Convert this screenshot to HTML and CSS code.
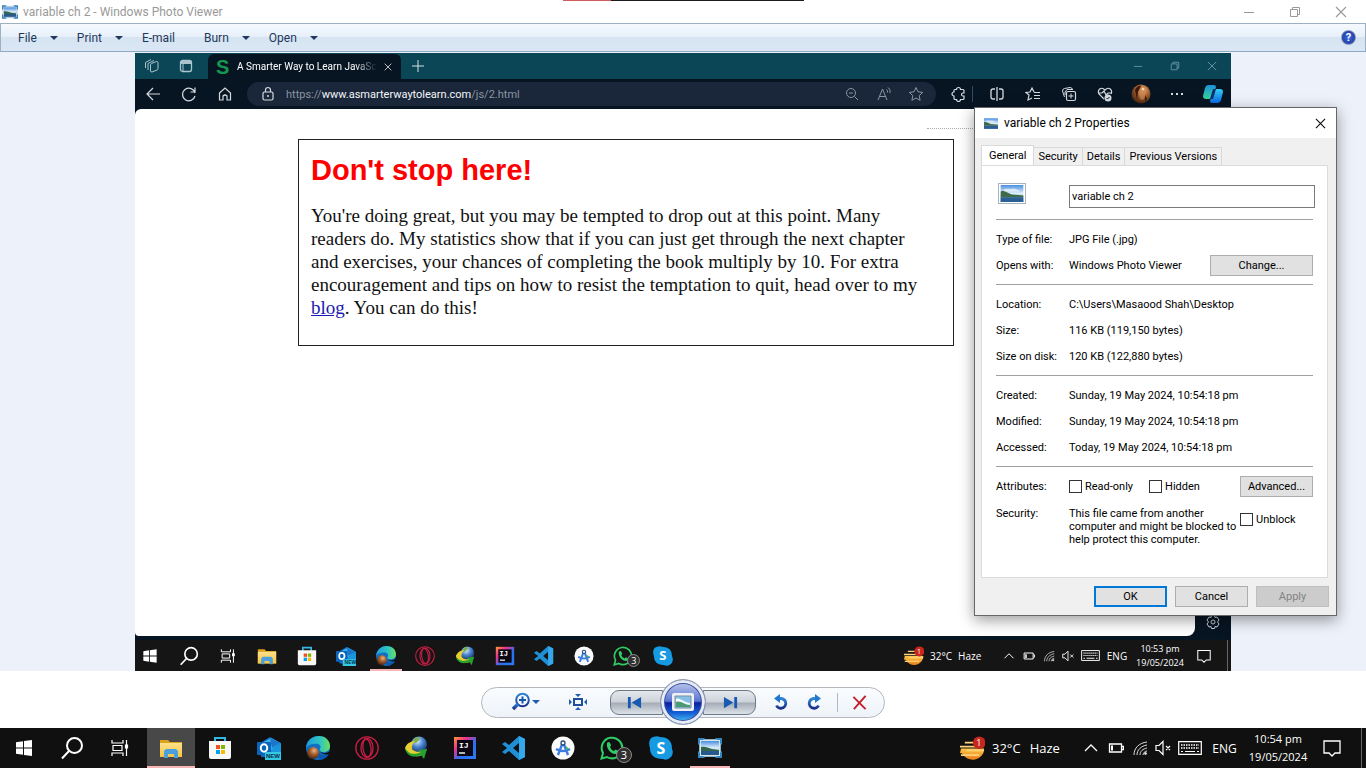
FILE: index.html
```html
<!DOCTYPE html>
<html lang="en">
<head>
<meta charset="utf-8">
<title>variable ch 2 - Windows Photo Viewer</title>
<link rel="stylesheet" href="styles.css">
</head>
<body>
<svg class="sprite" aria-hidden="true">
  <defs>
    <linearGradient id="gBlue" x1="0" y1="0" x2="0" y2="1"><stop offset="0" stop-color="#2f86d6"/><stop offset="1" stop-color="#1c2f8a"/></linearGradient>
    <linearGradient id="gSky" x1="0" y1="0" x2="0" y2="1"><stop offset="0" stop-color="#4a8fe0"/><stop offset=".5" stop-color="#dff0fa"/><stop offset="1" stop-color="#3a6ea5"/></linearGradient>
    <linearGradient id="gEdge" x1="0" y1="0" x2="1" y2="0"><stop offset="0" stop-color="#1f9be0"/><stop offset=".6" stop-color="#2fc6c0"/><stop offset="1" stop-color="#6be05a"/></linearGradient>
    <linearGradient id="gIj" x1="0" y1="0" x2="1" y2="1"><stop offset="0" stop-color="#fe9a2e"/><stop offset=".3" stop-color="#f0318c"/><stop offset=".6" stop-color="#2a6ff0"/><stop offset="1" stop-color="#2b7cf5"/></linearGradient>
    <linearGradient id="gFolder" x1="0" y1="0" x2="0" y2="1"><stop offset="0" stop-color="#ffe08a"/><stop offset="1" stop-color="#f5c542"/></linearGradient>
    <linearGradient id="gSun" x1="0" y1="0" x2="0" y2="1"><stop offset="0" stop-color="#ffc846"/><stop offset="1" stop-color="#ea7d1a"/></linearGradient>
    <radialGradient id="gGlobe" cx=".4" cy=".3" r=".7"><stop offset="0" stop-color="#d6ecff"/><stop offset=".5" stop-color="#4d86cf"/><stop offset="1" stop-color="#173a7c"/></radialGradient>
    <radialGradient id="gFace" cx=".6" cy=".3" r=".8"><stop offset="0" stop-color="#f0b27c"/><stop offset=".4" stop-color="#a9622f"/><stop offset="1" stop-color="#32170c"/></radialGradient>
    <linearGradient id="gCop1" x1="0" y1="0" x2="0" y2="1"><stop offset="0" stop-color="#1b8fd8"/><stop offset="1" stop-color="#35d59a"/></linearGradient>
    <linearGradient id="gCop2" x1="0" y1="0" x2="0" y2="1"><stop offset="0" stop-color="#35cdf2"/><stop offset="1" stop-color="#0b6be8"/></linearGradient>
  </defs>
  <symbol id="photo" viewBox="0 0 24 18"><rect width="24" height="18" fill="url(#gSky)"/><path d="M0 7c5-2 7 2 12 3l12 1v2H0z" fill="#3e6b4a"/><path d="M0 13h24v5H0z" fill="#2c5f95"/><path d="M3 5c3-2 6 0 9-1s5 1 8 2v1H4z" fill="#fff" opacity=".6"/></symbol>
  <symbol id="viewer" viewBox="0 0 24 20"><path d="M1.500 1.500h21v17h-21z" fill="#d5e6ee" stroke="#8fb2c8"/><rect x="3" y="3" width="18" height="14" fill="url(#gSky)"/><path d="M3 9c4-1 7 1 11 2l7 1v2H3z" fill="#34684e"/><path d="M3 13h18v4H3z" fill="#28598c"/><path d="M0 0h7L5 2H2v3L0 7zM24 0h-7l2 2h3v3l2 2zM0 20h7l-2-2H2v-3l-2-2zM24 20h-7l2-2h3v-3l2-2z" fill="#3583bd"/></symbol>
  <symbol id="win" viewBox="0 0 24 24"><path d="M4 6.200l7-1v6.300H4zM12 5l8-1v7.500h-8zM4 12.500h7v6.300l-7-1zM12 12.500h8V20l-8-1z" fill="#fff"/></symbol>
  <symbol id="search" viewBox="0 0 24 24" fill="none" stroke="#fff" stroke-width="2"><circle cx="14.500" cy="9.500" r="7.500"/><path d="M9 15l-7 7.500"/></symbol>
  <symbol id="taskview" viewBox="0 0 24 24" fill="none" stroke="#fff" stroke-width="1.200"><path d="M4 4v3h11V4M5 9.500h9v5H5zM4 20v-3h11v3M18.500 4v16"/><path d="M17.500 9h2v3h-2z" fill="#fff"/></symbol>
  <symbol id="folder" viewBox="0 0 24 24"><path d="M1 4h8l2 2h12v15H1z" fill="#dca21c"/><path d="M1 7h22v14H1z" fill="url(#gFolder)"/><path d="M5 22v-7l2-2h10l2 2v7h-4v-4H9v4z" fill="#4aa0dc"/></symbol>
  <symbol id="store" viewBox="0 0 24 24"><path d="M7 6V2h10v4" fill="none" stroke="#35b6e8" stroke-width="2"/><path d="M1 5h22v16q0 2-2 2H3q-2 0-2-2z" fill="#f7f7f7"/><path d="M8 9h4v4H8z" fill="#f05024"/><path d="M13 9h4v4h-4z" fill="#7eb900"/><path d="M8 14h4v4H8z" fill="#00a2ed"/><path d="M13 14h4v4h-4z" fill="#fdb900"/></symbol>
  <symbol id="outlook" viewBox="0 0 24 24"><path d="M3 7l10-6 11 6v14H4z" fill="#1368bd"/><path d="M5 7l9-5 9 5-10 8z" fill="#38b4ed"/><path d="M13 2l10 5-8 5z" fill="#1a76c8"/><path d="M11 16l13-9v14H9z" fill="#1897df"/><rect y="6" width="14" height="13" rx="1" fill="#0a65bd"/><ellipse cx="7" cy="12" rx="3.200" ry="3.800" fill="none" stroke="#fff" stroke-width="2"/><rect x="8" y="16" width="16" height="8" fill="#35c9e6"/></symbol>
  <symbol id="edge" viewBox="0 0 24 24"><circle cx="12" cy="12" r="12" fill="#126fc2"/><path d="M0 12C1 4 7 0 13 0c7 0 11 5 11 10 0 4-3 6-7 6-3 0-4-1-3-3 2-4-2-6-6-5-4 0-7 2-8 4z" fill="url(#gEdge)"/><path d="M12 13c0 6 6 8 11 5-1 3-5 5-8 6-5-2-7-8-3-11z" fill="#0a5ab0"/><path d="M14 14c1 4 6 4 10 1v3c-4 1-9 1-10-4z" fill="#111"/><circle cx="7" cy="17" r="6" fill="url(#gFace)"/></symbol>
  <symbol id="opera" viewBox="0 0 24 24" fill="none" stroke="#c81e45" stroke-width="1.300"><circle cx="12" cy="12" r="11.200"/><ellipse cx="12" cy="12" rx="6" ry="9.500"/><ellipse cx="12" cy="12" rx="4" ry="9" transform="rotate(-7 12 12)"/></symbol>
  <symbol id="idm" viewBox="0 0 24 24"><circle cx="15" cy="8.500" r="8" fill="url(#gGlobe)"/><path d="M11 2c3-2 6 0 4 2s-2 3-4 3-2-3 0-5z" fill="#7dae4a"/><path d="M1 12c2-5 6-7 10-7-3 3-4 7-2 9 4 3 8 2 14-1-3 6-7 8-12 7C6 20 2 17 1 12z" fill="#e7cf32"/><path d="M1 12c1 7 8 11 16 7l3 4 3-10-9 1 3 2C9 20 4 17 1 12z" fill="#25a12e"/></symbol>
  <symbol id="ij" viewBox="0 0 24 24"><path d="M1 1h22v22H1z" fill="url(#gIj)"/><path d="M4 4h16v16H4z" fill="#0b0713"/><path d="M6 17h6" fill="none" stroke="#fff" stroke-width="1.400"/></symbol>
  <symbol id="code" viewBox="0 0 24 24"><path d="M17 0l6 3v18l-6 3-10-9-4 3-3-2 5-4-5-4 3-2 4 3zM17 7l-6 5 6 5z" fill="#1e8fd5" fill-rule="evenodd"/><path d="M17 0l6 3v18l-6 3z" fill="#35a8ec"/></symbol>
  <symbol id="studio" viewBox="0 0 24 24"><circle cx="12" cy="12" r="11.500" fill="#fafafa"/><path d="M12 6L7 19M12 6l5 13M5 13q7 4 14 0" fill="none" stroke="#3b7de0" stroke-width="2.400"/><circle cx="12" cy="7" r="2" fill="#fff" stroke="#294b7c" stroke-width="1.300"/><path d="M15 10l3 3-3 1z" fill="#42b265"/></symbol>
  <symbol id="whatsapp" viewBox="0 0 24 24"><path d="M1.500 22.500L3 17A10.300 10.300 0 1 1 7 21z" fill="none" stroke="#2fcc66" stroke-width="2"/><path d="M7 7q2-2 3 0l1 2q0 1-1 2 1 3 4 4l1.500-1.500 3 1.500q0 3-3 3C11 18 6 13 7 7z" fill="#2fcc66"/></symbol>
  <symbol id="skype" viewBox="0 0 24 24"><path d="M2 2q5-3 9-1 12 0 12 12 2 4-1 8-4 4-8 2Q1 23 1 12-1 6 2 2z" fill="#169be3"/></symbol>
  <symbol id="haze" viewBox="0 0 26 26"><path d="M1 13h24a12 11 0 0 1-23 5h-2" fill="url(#gSun)"/><path d="M5 7h10M0 11h18M7 15h18M1 20h19" stroke="#ffd27a" stroke-width="1.800"/><circle cx="20" cy="7" r="6.500" fill="#c7271d"/></symbol>
  <symbol id="up" viewBox="0 0 16 16"><path d="M2 11l6-6 6 6" fill="none" stroke="#fff" stroke-width="1.300"/></symbol>
  <symbol id="battery" viewBox="0 0 16 16"><path d="M1.500 4h12v8h-12zM14 6.500h1.500v3H14" fill="none" stroke="#fff" stroke-width="1.300"/><path d="M3 5.500h2v5H3z" fill="#fff"/></symbol>
  <symbol id="wifi" viewBox="0 0 16 16" fill="none" stroke="#ddd"><path d="M2 15C2 8 7 3 15 2M5 15c0-5 4-9 10-10M8 15c0-4 3-6 7-7M11 15c0-2 2-4 4-4"/><circle cx="13.500" cy="13.500" r="1" fill="#ddd"/></symbol>
  <symbol id="mute" viewBox="0 0 16 16"><path d="M1 5.500h3l4-4v13l-4-4H1zM11 6l4 4M15 6l-4 4" fill="none" stroke="#fff" stroke-width="1.200"/></symbol>
  <symbol id="keyboard" viewBox="0 0 24 14"><path d="M.7.700h22.600v12.600H.7z" fill="none" stroke="#fff" stroke-width="1.200"/><path d="M3 4h18M3 7h18" stroke="#fff" stroke-width="1.500" stroke-dasharray="1.500 1"/><path d="M3 10.500h2M7 10.500h10M19 10.500h2" stroke="#fff" stroke-width="1.200"/></symbol>
  <symbol id="note" viewBox="0 0 18 18"><path d="M1 2h16v12h-5l-3 3-3-3H1z" fill="none" stroke="#fff" stroke-width="1.300"/></symbol>
  <symbol id="min" viewBox="0 0 12 12"><path d="M1 6.500h10" fill="none" stroke="currentColor"/></symbol>
  <symbol id="restore" viewBox="0 0 12 12"><path d="M1.500 3.500h7v7h-7zM3.500 3.500v-2h7v7h-2" fill="none" stroke="currentColor"/></symbol>
  <symbol id="close" viewBox="0 0 12 12"><path d="M1 1l10 10M11 1L1 11" fill="none" stroke="currentColor" stroke-width="1.100"/></symbol>
  <symbol id="workspaces" viewBox="0 0 16 16"><path d="M6.500 7q0-1 1-1.500l5-2q1.500 0 1.500 1v6q0 1-1 1.500l-5 2q-1.500 0-1.500-1zM4 12V5.500L10 2.500M1.500 10V4.500L7 1.500" fill="none" stroke="currentColor"/></symbol>
  <symbol id="tabs" viewBox="0 0 16 16"><rect x="2.500" y="2.500" width="11" height="11" rx="2" fill="none" stroke="currentColor" stroke-width="1.300"/><path d="M2 3h12v3H2z" fill="currentColor"/><path d="M5 6v7" stroke="currentColor"/></symbol>
  <symbol id="back" viewBox="0 0 16 16"><path d="M15 8H2M8 2L2 8l6 6" fill="none" stroke="currentColor" stroke-width="1.200"/></symbol>
  <symbol id="reload" viewBox="0 0 16 16"><path d="M14 7a6.300 6.300 0 1 0 0 3M14 1.500V6H9.500" fill="none" stroke="currentColor" stroke-width="1.200"/></symbol>
  <symbol id="home" viewBox="0 0 16 16"><path d="M2.500 7L8 2l5.500 5v7H10v-4q-2-2-4 0v4H2.500z" fill="none" stroke="currentColor" stroke-width="1.200"/></symbol>
  <symbol id="lock" viewBox="0 0 16 16"><rect x="3" y="6" width="10" height="8" rx="1.500" fill="none" stroke="currentColor" stroke-width="1.200"/><path d="M5.500 6V4a2.500 2.500 0 0 1 5 0v2" fill="none" stroke="currentColor" stroke-width="1.200"/><circle cx="8" cy="10" r="1" fill="currentColor"/></symbol>
  <symbol id="zoomout" viewBox="0 0 16 16"><circle cx="7" cy="7" r="4.500" fill="none" stroke="currentColor"/><path d="M10.500 10.500L14 14M5 7h4" stroke="currentColor"/></symbol>
  <symbol id="read" viewBox="0 0 16 16"><path d="M2 14L6.500 3 11 14M3.500 10.500h6M10.500 3.500q1.500 1 1 3M12 1.500q3 2 2 5.500" fill="none" stroke="currentColor"/></symbol>
  <symbol id="star" viewBox="0 0 16 16"><path d="M8 1.500l2 4.300 4.700.600-3.500 3.200.9 4.700L8 12l-4.100 2.300.9-4.700L1.300 6.400 6 5.800z" fill="none" stroke="currentColor"/></symbol>
  <symbol id="puzzle" viewBox="0 0 16 16"><path d="M5.500 3.500a2 2 0 0 1 4 0H12q1 0 1 1V7h-1a1.500 1.500 0 0 0 0 3h1v2.500q0 1-1 1H9.500a2 2 0 0 1-4 0H4q-1 0-1-1V10a2 2 0 0 1 0-4V4.500q0-1 1-1z" fill="none" stroke="currentColor" stroke-width="1.200"/></symbol>
  <symbol id="split" viewBox="0 0 16 16"><path d="M6 3H4Q2 3 2 5v6q0 2 2 2h2M10 3h2q2 0 2 2v6q0 2-2 2h-2M8 1v14" fill="none" stroke="currentColor" stroke-width="1.300"/></symbol>
  <symbol id="favs" viewBox="0 0 16 16"><path d="M9 6L7 2 5 6l-4 .5L4 9l-1 5 4-2M9 6.500h6M9 9.500h6M9 12.500h6" fill="none" stroke="currentColor" stroke-width="1.200"/></symbol>
  <symbol id="collect" viewBox="0 0 16 16"><rect x="5.500" y="5.500" width="9" height="9" rx="1.500" fill="none" stroke="currentColor" stroke-width="1.200"/><path d="M10 7.500v5M7.500 10h5M3.500 11L1.500 5q0-2 2-2.500L9 1.500q2 0 2.500 2M4 9V6l2-2.500h6" fill="none" stroke="currentColor"/></symbol>
  <symbol id="heart" viewBox="0 0 16 16"><path d="M7 13L2 8C0 4 4 0 8 4c4-4 8 0 6 4M1 7h4l2-2 2 4 2-2h3" fill="none" stroke="currentColor" stroke-width="1.200"/><circle cx="11" cy="12" r="3.500" fill="currentColor"/><path d="M9.500 12l1 1 2-2" fill="none" stroke="#071523"/></symbol>
  <symbol id="dots" viewBox="0 0 16 16"><path d="M2 8h2M7 8h2M12 8h2" stroke="currentColor" stroke-width="2"/></symbol>
  <symbol id="copilot" viewBox="0 0 20 20"><path d="M5 1h6q2 0 2 2l-3 9q-1 3-4 3H3q-3 0-3-3L2 4q1-3 3-3z" fill="url(#gCop1)"/><path d="M12 5h5q3 0 3 3l-2 8q-1 3-3 3H9q-2 0-2-2l3-9q1-3 2-3z" fill="url(#gCop2)"/><path d="M10 5h3l-3 10H7z" fill="#0a2f6d"/></symbol>
  <symbol id="gear" viewBox="0 0 16 16" fill="none" stroke="#cfd6dc"><circle cx="8" cy="8" r="2"/><path d="M6.500 1.500h3l.5 2 2-.5 2 3-1.500 2L14 10l-2 3-2-.5-.5 2h-3l-.5-2-2 .5-2-3 1.500-2L2 6l2-3 2 .5z"/></symbol>
  <symbol id="zoomin" viewBox="0 0 20 20" fill="none" stroke="url(#gBlue)"><circle cx="11.500" cy="8" r="6.300" stroke-width="2"/><path d="M7 12l-5 5" stroke-width="3.500"/><path d="M11.500 4.500v7M8 8h7" stroke="#1557ad" stroke-width="2"/></symbol>
  <symbol id="fit" viewBox="0 0 20 20"><path d="M6 7h8v6H6z" fill="none" stroke="#1c4f9c" stroke-width="2"/><path d="M7 2h6l-3 3zM7 18h6l-3-3zM1 7v6l3-3zM19 7v6l-3-3z" fill="#1b5eb5"/></symbol>
  <symbol id="prev" viewBox="0 0 16 16"><path d="M1 2h3v12H1zM15 2v12L5 8z" fill="#1759b3"/></symbol>
  <symbol id="next" viewBox="0 0 16 16"><path d="M12 2h3v12h-3zM1 2v12l10-6z" fill="#1759b3"/></symbol>
  <symbol id="ccw" viewBox="0 0 16 16"><path d="M5 4.500h3.500a4.900 4.900 0 1 1-5 7" fill="none" stroke="url(#gBlue)" stroke-width="2.800"/><path d="M1 4.500L7 0v9z" fill="#2477c9"/></symbol>
  <symbol id="cw" viewBox="0 0 16 16"><path d="M11 4.500H7.500a4.900 4.900 0 1 0 5 7" fill="none" stroke="url(#gBlue)" stroke-width="2.800"/><path d="M15 4.500L9 0v9z" fill="#2477c9"/></symbol>
  <symbol id="del" viewBox="0 0 16 16"><path d="M1.500 2l13 13M14.500 1L2 15" fill="none" stroke="#c01f2b" stroke-width="2"/></symbol>
</svg>

<header class="titlebar">
  <svg class="app-icon"><use href="#viewer"/></svg>
  <h1 class="app-title">variable ch 2 - Windows Photo Viewer</h1>
  <div class="recorder"></div>
  <div class="window-buttons">
    <button aria-label="Minimize"><svg><use href="#min"/></svg></button>
    <button aria-label="Restore"><svg><use href="#restore"/></svg></button>
    <button aria-label="Close"><svg><use href="#close"/></svg></button>
  </div>
</header>

<nav class="menu">
  <button class="drop">File</button>
  <button class="drop">Print</button>
  <button class="mail">E-mail</button>
  <button class="drop">Burn</button>
  <button class="drop">Open</button>
  <button class="help" aria-label="Help">?</button>
</nav>

<main class="stage">
  <section class="browser">
    <div class="tabbar">
      <div class="tab-tools"><svg class="i16"><use href="#workspaces"/></svg><svg class="i16"><use href="#tabs"/></svg></div>
      <div class="tab"><b class="favicon">S</b><span class="tab-title">A Smarter Way to Learn JavaScrip</span><svg class="i8"><use href="#close"/></svg></div>
      <button class="plus" aria-label="New tab"><svg viewBox="0 0 12 12"><path d="M6 0v12M0 6h12" stroke="#d5e2e6"/></svg></button>
      <div class="tab-window"><svg><use href="#min"/></svg><svg><use href="#restore"/></svg><svg><use href="#close"/></svg></div>
    </div>
    <div class="toolbar">
      <button aria-label="Back"><svg><use href="#back"/></svg></button>
      <button aria-label="Refresh"><svg><use href="#reload"/></svg></button>
      <button aria-label="Home"><svg><use href="#home"/></svg></button>
      <div class="address">
        <svg><use href="#lock"/></svg>
        <span class="url">https://<b>www.asmarterwaytolearn.com</b>/js/2.html</span>
        <svg><use href="#zoomout"/></svg><svg><use href="#read"/></svg><svg><use href="#star"/></svg>
      </div>
      <button class="ext" aria-label="Extensions"><svg><use href="#puzzle"/></svg></button>
      <button aria-label="Split screen"><svg><use href="#split"/></svg></button>
      <button aria-label="Favorites"><svg><use href="#favs"/></svg></button>
      <button aria-label="Collections"><svg><use href="#collect"/></svg></button>
      <button aria-label="Browser essentials"><svg><use href="#heart"/></svg></button>
      <button aria-label="Profile"><svg class="i20" viewBox="0 0 20 20"><circle cx="10" cy="10" r="9.500" fill="url(#gFace)"/><path d="M7 8q0-4 4-4t4 5l-2 6-3 1z" fill="#c98551" opacity=".7"/><path d="M4 6q3-5 6-4L7 8l-1 8zM14 11l2 4-2 3z" fill="#3a190c"/><circle cx="12" cy="5" r="1.300" fill="#f8d7b1"/></svg></button>
      <button aria-label="More"><svg><use href="#dots"/></svg></button>
      <button aria-label="Copilot"><svg class="i20"><use href="#copilot"/></svg></button>
    </div>
    <div class="view">
      <div class="page">
        <div class="dotted"></div>
        <article class="notice">
          <h2>Don't stop here!</h2>
          <p>You're doing great, but you may be tempted to drop out at this point. Many<br>readers do. My statistics show that if you can just get through the next chapter<br>and exercises, your chances of completing the book multiply by 10. For extra<br>encouragement and tips on how to resist the temptation to quit, head over to my<br><a href="#blog">blog</a>. You can do this!</p>
        </article>
      </div>
      <aside class="side"><svg class="i16"><use href="#gear"/></svg></aside>
    </div>
    <div class="taskbar small">
      <div class="system"><svg><use href="#win"/></svg><svg><use href="#search"/></svg><svg><use href="#taskview"/></svg></div>
      <div class="apps">
        <span><svg><use href="#folder"/></svg></span><span><svg><use href="#store"/></svg></span><span><svg><use href="#outlook"/></svg><em class="new">NEW</em></span><span class="open"><svg><use href="#edge"/></svg></span><span><svg><use href="#opera"/></svg></span><span><svg><use href="#idm"/></svg></span><span><svg><use href="#ij"/></svg><em class="ij">IJ</em></span><span><svg><use href="#code"/></svg></span><span><svg><use href="#studio"/></svg></span><span><svg><use href="#whatsapp"/></svg><em class="count">3</em></span><span><svg><use href="#skype"/></svg><em class="skype">S</em></span>
      </div>
      <div class="tray">
        <span class="weather"><svg><use href="#haze"/></svg><em class="alert">1</em></span><span class="temp"><span>32°C</span><span>Haze</span></span>
        <svg><use href="#up"/></svg><svg><use href="#battery"/></svg><svg><use href="#wifi"/></svg><svg><use href="#mute"/></svg><svg class="kbd"><use href="#keyboard"/></svg>
        <span>ENG</span><span class="clock">10:53 pm<br>19/05/2024</span><svg class="bell"><use href="#note"/></svg><i></i><i class="peek"></i>
      </div>
    </div>
  </section>
</main>

<div class="controls">
  <div class="pill">
    <button class="zoom" aria-label="Zoom"><svg class="i20"><use href="#zoomin"/></svg></button>
    <button class="fit" aria-label="Fit to window"><svg class="i20"><use href="#fit"/></svg></button>
    <button class="step prev" aria-label="Previous"><svg><use href="#prev"/></svg></button>
    <button class="play" aria-label="Play slide show"><svg viewBox="0 0 24 20"><rect x="1" y="1" width="22" height="18" rx="2" fill="#edf0f4"/><path d="M4 4h16v12H4z" fill="#86bfe5" stroke="#7b8ea6"/><path d="M5 7c4-2 8 4 14 4v2H5z" fill="#f7fcff"/><path d="M5 10c5-2 8 3 14 3v2H5z" fill="#4b9a72"/></svg></button>
    <button class="step next" aria-label="Next"><svg><use href="#next"/></svg></button>
    <button class="turn" aria-label="Rotate left"><svg><use href="#ccw"/></svg></button>
    <button class="turn" aria-label="Rotate right"><svg><use href="#cw"/></svg></button>
    <button class="delete" aria-label="Delete"><svg><use href="#del"/></svg></button>
  </div>
</div>

<footer class="taskbar large">
  <div class="system"><svg><use href="#win"/></svg><svg><use href="#search"/></svg><svg><use href="#taskview"/></svg></div>
  <div class="apps">
    <span class="open active"><svg><use href="#folder"/></svg></span><span><svg><use href="#store"/></svg></span><span><svg><use href="#outlook"/></svg><em class="new">NEW</em></span><span><svg><use href="#edge"/></svg></span><span><svg><use href="#opera"/></svg></span><span><svg><use href="#idm"/></svg></span><span><svg><use href="#ij"/></svg><em class="ij">IJ</em></span><span><svg><use href="#code"/></svg></span><span><svg><use href="#studio"/></svg></span><span><svg><use href="#whatsapp"/></svg><em class="count">3</em></span><span><svg><use href="#skype"/></svg><em class="skype">S</em></span><span class="open running"><svg><use href="#viewer"/></svg></span>
  </div>
  <div class="tray">
    <span class="weather"><svg><use href="#haze"/></svg><em class="alert">1</em></span><span class="temp"><span>32°C</span><span>Haze</span></span>
    <svg><use href="#up"/></svg><svg><use href="#battery"/></svg><svg><use href="#wifi"/></svg><svg><use href="#mute"/></svg><svg class="kbd"><use href="#keyboard"/></svg>
    <span>ENG</span><span class="clock">10:54 pm<br>19/05/2024</span><svg class="bell"><use href="#note"/></svg><i></i><i class="peek"></i>
  </div>
</footer>

<form class="dialog">
  <div class="dialog-title"><svg class="dialog-icon"><use href="#photo"/></svg><h2>variable ch 2 Properties</h2><button type="button" class="dialog-close" aria-label="Close"><svg><use href="#close"/></svg></button></div>
  <div class="dialog-tabs">
    <button type="button" class="current">General</button><button type="button">Security</button><button type="button">Details</button><button type="button">Previous Versions</button>
  </div>
  <div class="panel">
    <div class="file"><svg class="thumb"><use href="#photo"/></svg><input type="text" value="variable ch 2" aria-label="File name"></div>
    <dl>
      <div><dt>Type of file:</dt><dd>JPG File (.jpg)</dd></div>
      <div><dt>Opens with:</dt><dd>Windows Photo Viewer</dd><button type="button" class="btn change">Change...</button></div>
    </dl>
    <dl>
      <div><dt>Location:</dt><dd>C:\Users\Masaood Shah\Desktop</dd></div>
      <div><dt>Size:</dt><dd>116 KB (119,150 bytes)</dd></div>
      <div><dt>Size on disk:</dt><dd>120 KB (122,880 bytes)</dd></div>
    </dl>
    <dl>
      <div><dt>Created:</dt><dd>Sunday, 19 May 2024, 10:54:18 pm</dd></div>
      <div><dt>Modified:</dt><dd>Sunday, 19 May 2024, 10:54:18 pm</dd></div>
      <div><dt>Accessed:</dt><dd>Today, 19 May 2024, 10:54:18 pm</dd></div>
    </dl>
    <dl>
      <div><dt>Attributes:</dt><dd class="checks"><label><input type="checkbox">Read-only</label><label><input type="checkbox">Hidden</label></dd><button type="button" class="btn">Advanced...</button></div>
      <div class="security"><dt>Security:</dt><dd>This file came from another<br>computer and might be blocked to<br>help protect this computer.</dd><label><input type="checkbox">Unblock</label></div>
    </dl>
  </div>
  <div class="actions"><button type="button" class="btn ok">OK</button><button type="button" class="btn">Cancel</button><button type="button" class="btn" disabled>Apply</button></div>
</form>
</body>
</html>
```
FILE: styles.css
```css
* { box-sizing: border-box; }
body {
  margin: 0;
  min-height: 100vh;
  display: flex;
  flex-direction: column;
  position: relative;
  background: #fff;
  font: 11px "Open Sans", "Noto Sans", sans-serif;
}
h1, h2, p, dl, dd { margin: 0; }
button { border: 0; padding: 0; background: none; font: inherit; color: inherit; }
svg { display: block; width: 16px; height: 16px; flex: none; }
.sprite { position: absolute; width: 0; height: 0; }
.i8 { width: 8px; height: 8px; }
.i16 { width: 16px; height: 16px; }

/* Viewer window */
.titlebar { height: 23px; display: flex; align-items: center; padding: 0 2px; color: #999; }
.app-icon { width: 16px; height: 14px; margin-right: 5px; }
.app-title { font: 12px "Roboto", sans-serif; flex: 1; }
.recorder {
  position: absolute; top: 0; left: 563px; width: 241px; height: 1px;
  background: linear-gradient(90deg, #d05a5e 48px, #1c1c1c 48px);
}
.window-buttons { display: flex; }
.window-buttons button { width: 46px; display: flex; justify-content: center; }
.window-buttons svg { width: 12px; height: 12px; }

.menu {
  height: 29px;
  display: flex;
  align-items: center;
  padding: 0 9px 0 17px;
  color: #1e395b;
  font-family: "Roboto", sans-serif;
  font-size: 12px;
  border: 1px solid #9db0c3;
  border-bottom-color: #8fabc4;
  background: linear-gradient(#f6fafe, #e6eff9 48%, #d6e4f2 49%, #dae6f3);
}
.drop { display: flex; align-items: center; gap: 13px; margin-right: 19px; }
.drop::after { content: ""; border: 4px solid transparent; border-top-color: #1e395b; border-bottom: 0; }
.mail { margin-right: 29px; }
.help {
  width: 15px; height: 15px; margin-left: auto;
  border-radius: 50%;
  border: 1px solid #8a97b8;
  background: radial-gradient(#3d6be0, #15308f);
  color: #fff; font-weight: 700; font-size: 11px; line-height: 13px;
}
.stage { flex: 1; display: flex; padding: 1px 135px 0; background: #edf1fa; }
.browser { flex: 1; display: flex; flex-direction: column; background: #071523; }

.tabbar {
  height: 26px; display: flex; align-items: center;
  background: #0b4657; color: #a9c4cc;
}
.tab-tools { width: 73px; display: flex; gap: 18px; padding-left: 9px; }
.tab {
  width: 193px; height: 25px; align-self: flex-end;
  display: flex; align-items: center;
  padding: 0 9px 0 8px;
  border-radius: 6px 6px 0 0;
  background: #071523; color: #fff; font: 10px "Roboto", sans-serif;
}
.favicon { width: 21px; font: 700 20px/20px "Liberation Sans", sans-serif; color: #15974f; }
.tab-title {
  flex: 1; overflow: hidden; white-space: nowrap; margin-right: 7px;
  -webkit-mask-image: linear-gradient(90deg, #000 84%, transparent);
  mask-image: linear-gradient(90deg, #000 84%, transparent);
}
.plus { margin-left: 11px; }
.plus svg { width: 12px; height: 12px; }
.tab-window { margin-left: auto; display: flex; gap: 27px; padding-right: 14px; color: #6d9aa6; }
.tab-window svg { width: 10px; height: 10px; }

.toolbar { height: 30px; display: flex; align-items: center; color: #d5dade; }
.toolbar button { width: 36px; display: flex; justify-content: center; }
.toolbar .ext { width: 27px; margin: 0 6px 0 10px; border-right: 1px solid #3a4754; }
.toolbar .i20, .pill .i20 { width: 20px; height: 20px; }
.address {
  flex: 1; height: 24px; margin-left: 4px;
  display: flex; align-items: center; gap: 16px;
  padding: 0 12px 0 13px;
  border-radius: 12px; background: #1a2639; color: #8b95a2;
}
.address svg:first-child { color: #d5dade; margin-right: -6px; }
.url { flex: 1; font-family: "Roboto", sans-serif; font-size: 11px; color: #8b95a2; }
.url b { font-weight: 400; color: #f5f7f9; }

.view { flex: 1; display: flex; }
.page { flex: 1; background: #fff; border-radius: 6px 0 8px 4px; padding: 19px 0 0 163px; }
.side { width: 36px; display: flex; justify-content: center; align-items: flex-end; padding-bottom: 6px; }
.dotted { margin-left: 629px; border-top: 1px dotted #aaa; }
.notice {
  width: 656px; min-height: 207px; margin-top: 10px; padding: 12px;
  border: 1px solid #222;
}
.notice h2 { font: 700 29px/36px "Liberation Sans", sans-serif; color: #f00; margin-bottom: 16px; }
.notice p { font: 19px/23px "Liberation Serif", serif; color: #111; white-space: nowrap; }
.notice a { color: #1a1ab0; }

/* Taskbars */
.taskbar { display: flex; align-items: center; background: #101010; color: #fff; }
.system, .apps, .temp { display: flex; align-items: center; }
.apps { height: 100%; }
.apps span { height: 100%; display: flex; justify-content: center; align-items: center; position: relative; }
.apps .open { box-shadow: inset 0 -2px #f7b5b5; }
.taskbar em { position: absolute; font-style: normal; text-align: center; }
.tray { margin-left: auto; display: grid; align-items: center; justify-items: center; height: 100%; }
.clock { text-align: center; white-space: nowrap; }
.peek { width: 100%; height: 100%; border-left: 1px solid #666; }
.temp { justify-self: start; }
.weather { position: relative; }
.new { font: 700 6px/8px "Liberation Sans", sans-serif; color: #06304a; }
.ij { font: 700 8px/8px "Liberation Mono", monospace; }
.skype { inset: 0; font-weight: 700; }
.count { border: 1px solid #8b8b8b; border-radius: 50%; background: #303030; }

.large { height: 40px; font-size: 12px; }
.large .system { padding: 0 15px 0 12px; gap: 24px; }
.large .system svg, .large .apps svg { width: 24px; height: 24px; }
.large .apps { gap: 1px; }
.large .apps span { width: 48px; }
.large .apps .active { background: #484848; }
.large .apps .running { width: 40px; margin-left: 4px; }
.large .new { right: 13px; bottom: 8px; }
.large .ij { left: 18px; top: 14px; }
.large .skype { font-size: 16px; line-height: 40px; }
.large .count { left: 28px; top: 19px; width: 16px; height: 16px; font-size: 11px; line-height: 14px; }
.large .alert { right: 3px; top: 1px; font-size: 9px; line-height: 12px; }
.large .tray { grid-template-columns: 30px 91px 25px 25px 23px 23px 32px 37px 70px 38px 10px 5px; }
.large .temp { padding-left: 5px; gap: 9px; font-size: 13px; }
.large .clock { font-size: 11px; line-height: 18px; }
.large .weather svg { width: 25px; height: 25px; }
.large .kbd { width: 24px; height: 14px; }
.large .bell { width: 18px; height: 18px; }

.small { height: 31px; margin-top: 4px; font-size: 10px; background: #151515; }
.small .system { padding: 0 13px 0 5px; gap: 19px; }
.small .system svg { width: 20px; height: 20px; }
.small .apps { width: 428px; justify-content: space-between; }
.small .apps span { width: 32px; }
.small .apps svg { width: 20px; height: 20px; }
.small .new { right: 6px; bottom: 5px; font-size: 5px; }
.small .ij { left: 11px; top: 10px; font-size: 7px; }
.small .skype { font-size: 13px; line-height: 31px; }
.small .count { left: 20px; top: 14px; width: 13px; height: 13px; font-size: 9px; line-height: 11px; }
.small .alert { right: 3px; top: 1px; font-size: 7px; line-height: 9px; }
.small .tray { grid-template-columns: 24px 73px 20px 20px 19px 19px 26px 28px 58px 30px 8px 4px; }
.small .tray svg { width: 12px; height: 12px; }
.small .temp { padding-left: 4px; gap: 6px; }
.small .clock { font-size: 9px; line-height: 14px; }
.small .tray .weather svg { width: 20px; height: 20px; }
.small .tray .kbd { width: 19px; height: 11px; }
.small .tray .bell { width: 14px; height: 14px; }

/* Slide controls */
.controls { height: 57px; display: flex; justify-content: center; align-items: center; padding-top: 5px; }
.pill {
  width: 404px; height: 31px;
  display: flex; align-items: center;
  border: 1px solid #b4b8bd; border-radius: 16px;
  background: linear-gradient(#fafcfe, #eef3f9);
}
.pill button { display: flex; justify-content: center; align-items: center; flex: none; }
.pill .zoom { width: 32px; margin-left: 27px; gap: 1px; }
.zoom::after { content: ""; border: 4px solid transparent; border-top-color: #1d5bb0; border-bottom: 0; }
.pill .fit { width: 20px; margin-left: 27px; }
.pill .step {
  width: 53px; height: 25px; margin-left: 22px;
  border: 1px solid #6f7984;
  background: linear-gradient(#e4e8ed, #cdd3da 48%, #a3abb5 52%, #dce2e8);
}
.step svg { width: 15px; height: 15px; }
.pill .prev { border-radius: 9px 0 0 9px; padding-right: 4px; }
.pill .next { margin-left: 0; border-radius: 0 9px 9px 0; padding-left: 2px; }
.pill .play {
  width: 46px; height: 46px; margin: 0 -3px;
  z-index: 1; border-radius: 50%;
  border: 1px solid #8e98aa;
  box-shadow: inset 0 0 0 3px #e6ebf5, inset 0 0 0 4px #3a4f9c;
  background: linear-gradient(#b2bfe9 10%, #5a74d2 48%, #0c1fa0 52%, #1560d6 75%, #57d8fa);
}
.play svg { width: 24px; height: 20px; }
.pill .turn { width: 17px; margin-left: 16px; }
.pill .delete { padding-left: 14px; margin-left: 15px; height: 19px; border-left: 1px solid #b4b8bd; }
.delete svg { width: 15px; height: 15px; }

/* Properties dialog */
.dialog {
  position: absolute; top: 107px; right: 29px; width: 363px;
  border: 1px solid #666;
  background: #f0f0f0; color: #000;
  box-shadow: 0 4px 14px rgba(0, 0, 0, .4);
  font: 11px "Roboto", "Liberation Sans", sans-serif;
}
.dialog-title { height: 30px; display: flex; align-items: center; padding: 0 10px 0 9px; background: #fff; }
.dialog-icon { width: 14px; height: 11px; margin-right: 6px; }
.dialog-title h2 { font: 12px "Roboto", sans-serif; flex: 1; }
.dialog-close svg { width: 11px; height: 11px; }
.dialog-tabs { display: flex; align-items: flex-end; padding: 7px 0 0 6px; }
.dialog-tabs button {
  height: 18px; padding: 0 4px;
  border: 1px solid #d9d9d9; border-width: 1px 1px 0 0;
}
.dialog-tabs .current { height: 20px; padding: 0 7px; border-left-width: 1px; background: #fff; }
.panel { margin: 0 8px 0 6px; height: 413px; padding: 0 14px; border: 1px solid #dcdcdc; background: #fff; }
.file { display: flex; height: 53px; padding: 17px 0 0 2px; }
.thumb { width: 28px; height: 21px; margin-right: 43px; border: 1px solid #a9b3bd; padding: 1px; }
.file input {
  width: 246px; height: 23px; margin: 2px -2px 0 0; padding: 0 2px;
  border: 1px solid #7a7a7a; font: inherit; outline: 0;
}
dl { border-top: 1px solid #a0a0a0; padding: 6px 0; }
dl > div { display: flex; align-items: center; height: 26px; }
dt { width: 73px; }
dd { flex: 1; white-space: nowrap; }
.checks { display: flex; gap: 16px; }
label { display: flex; align-items: center; gap: 3px; }
label input { appearance: none; width: 13px; height: 13px; margin: 0; border: 1px solid #333; background: #fff; }
.btn, .btn:disabled { width: 73px; height: 21px; border: 1px solid #adadad; background: #e1e1e1; }
.change { width: 103px; }
.ok { border: 2px solid #0078d7; }
.btn:disabled { background: #ccc; border-color: #bfbfbf; color: #838383; }
dl .security { height: auto; padding-top: 8px; align-items: flex-start; line-height: 13px; }
.security label { width: 73px; padding-top: 6px; }
.actions { display: flex; justify-content: flex-end; gap: 8px; padding: 8px 7px; }
```
